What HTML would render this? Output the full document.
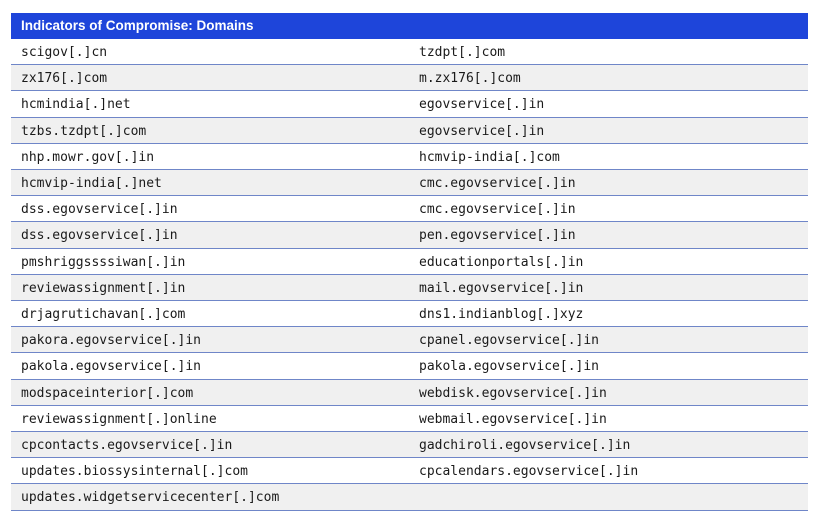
<!DOCTYPE html>
<html><head><style>
body{margin:0;width:820px;height:530px;background:#fff;position:relative;overflow:hidden}
.h{position:absolute;left:11px;top:13px;width:797px;height:26px;background:#1e45da;color:#fff;font:bold 13.5px "Liberation Sans",sans-serif;line-height:26px;box-sizing:border-box;padding-left:10px}
.r{position:absolute;left:11px;width:797px;height:26.2px;border-bottom:1.5px solid #6f86c8;box-sizing:border-box;font:13px "DejaVu Sans Mono",monospace;color:#1a1a1a;line-height:28px}
.r.g{background:#f0f0f0}
.r span{position:absolute;top:0}
.a{left:10px}.b{left:408px}
</style></head><body>
<div class="h">Indicators of Compromise: Domains</div>
<div id="t"></div>
<script>
var d=[["scigov[.]cn","tzdpt[.]com"],["zx176[.]com","m.zx176[.]com"],["hcmindia[.]net","egovservice[.]in"],["tzbs.tzdpt[.]com","egovservice[.]in"],["nhp.mowr.gov[.]in","hcmvip-india[.]com"],["hcmvip-india[.]net","cmc.egovservice[.]in"],["dss.egovservice[.]in","cmc.egovservice[.]in"],["dss.egovservice[.]in","pen.egovservice[.]in"],["pmshriggssssiwan[.]in","educationportals[.]in"],["reviewassignment[.]in","mail.egovservice[.]in"],["drjagrutichavan[.]com","dns1.indianblog[.]xyz"],["pakora.egovservice[.]in","cpanel.egovservice[.]in"],["pakola.egovservice[.]in","pakola.egovservice[.]in"],["modspaceinterior[.]com","webdisk.egovservice[.]in"],["reviewassignment[.]online","webmail.egovservice[.]in"],["cpcontacts.egovservice[.]in","gadchiroli.egovservice[.]in"],["updates.biossysinternal[.]com","cpcalendars.egovservice[.]in"],["updates.widgetservicecenter[.]com",""]];
var h="";d.forEach(function(x,i){h+='<div class="r'+(i%2?' g':'')+'" style="top:'+(39+i*26.2)+'px"><span class="a">'+x[0]+'</span><span class="b">'+x[1]+'</span></div>'});
document.getElementById("t").innerHTML=h;
</script>
</body></html>
